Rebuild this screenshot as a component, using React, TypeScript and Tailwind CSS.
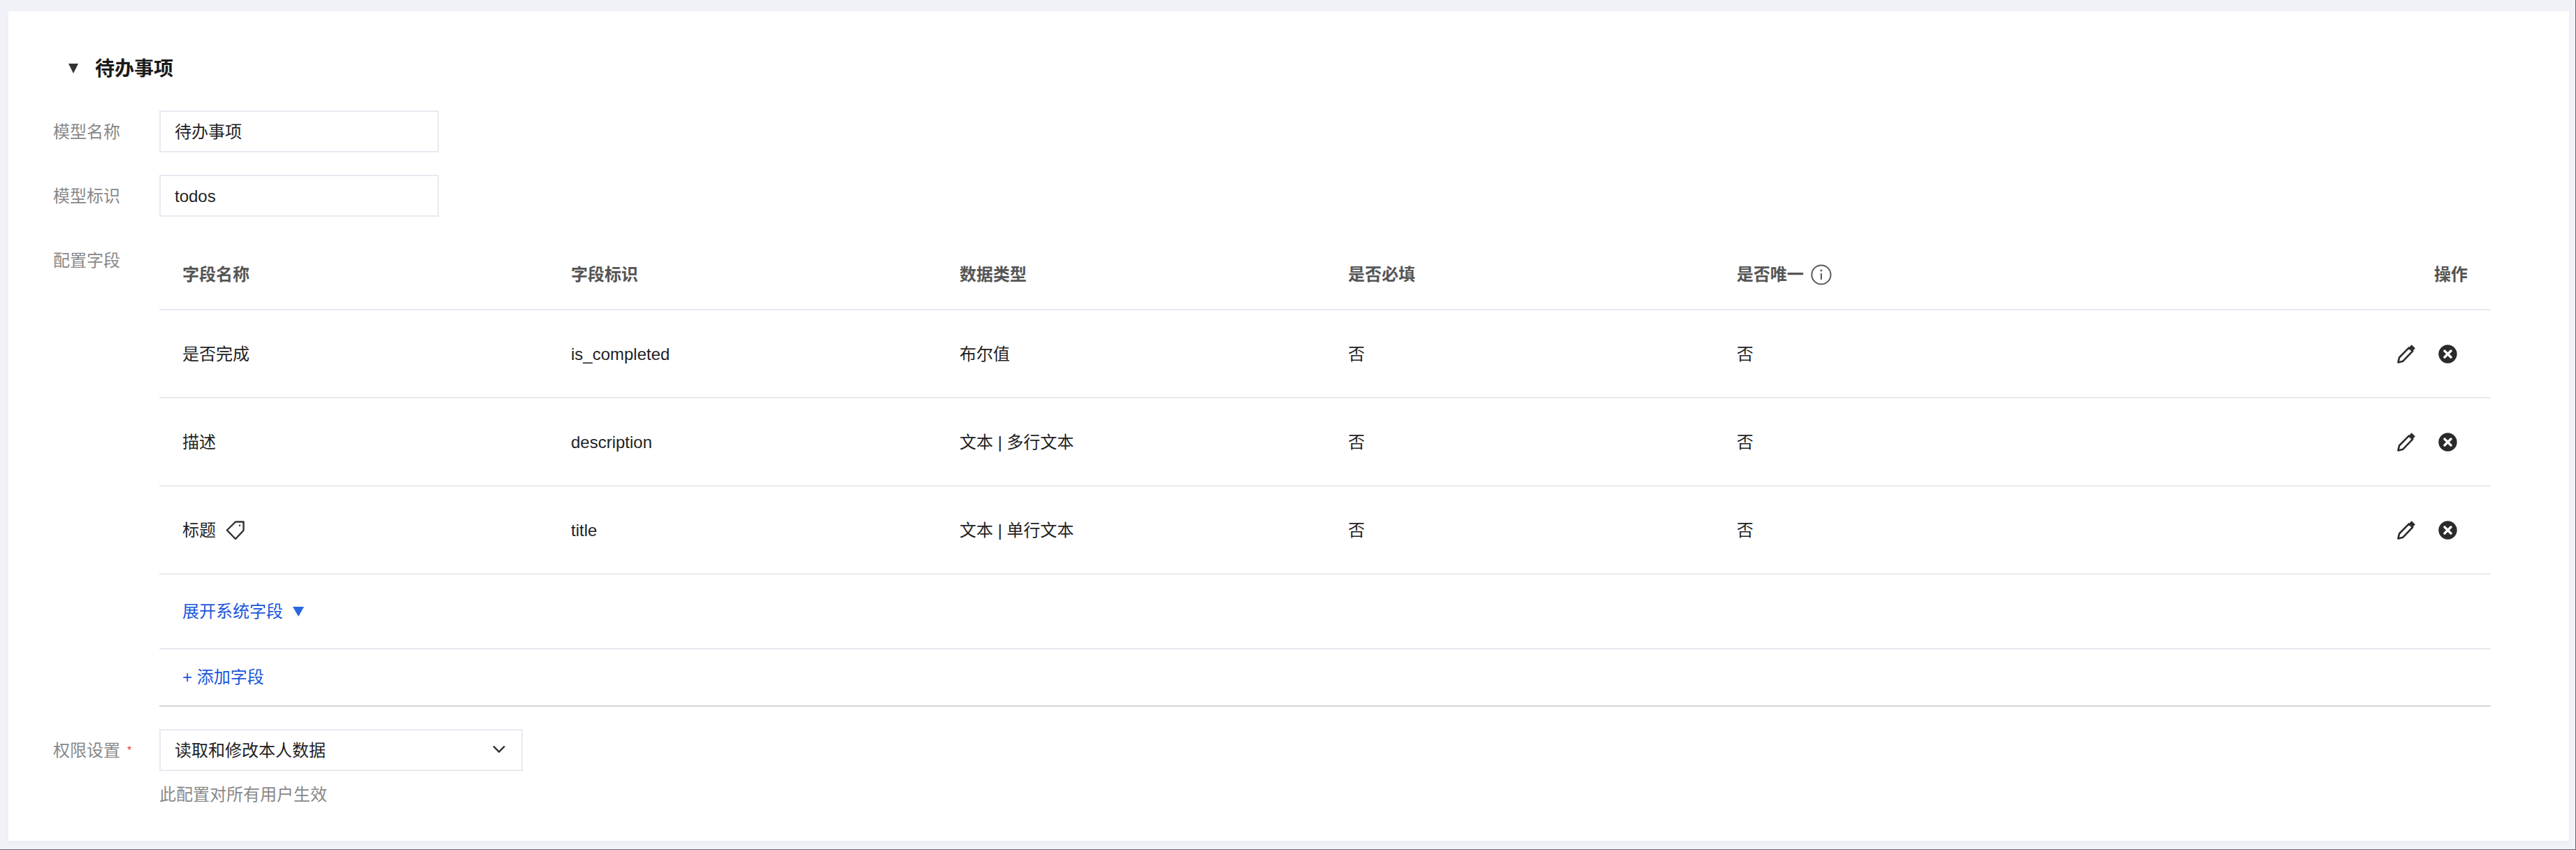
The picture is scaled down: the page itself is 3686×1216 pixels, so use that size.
const fieldRows = [
  { name: "是否完成", id: "is_completed", type: "布尔值" },
  { name: "描述", id: "description", type: "文本 | 多行文本" },
  { name: "标题", id: "title", type: "文本 | 单行文本", tag: true },
];

const PencilIcon = () => (
  <svg width="26" height="28" viewBox="0 0 26 28" fill="none" stroke="#2b2b2b" strokeWidth="2.6">
    <path d="M1.5 26.5l1.6-7L17 5.4l5.2 5L8.2 24.8z" strokeLinejoin="round" />
    <path d="M19.2 2.8l5.2 5" strokeWidth="4.4" />
  </svg>
);

const CloseIcon = () => (
  <svg width="27" height="27" viewBox="0 0 27 27">
    <circle cx="13.5" cy="13.5" r="13.2" fill="#2b2b2b" />
    <path d="M9 9l9 9M18 9l-9 9" stroke="#fff" strokeWidth="3.4" strokeLinecap="round" />
  </svg>
);

const TagIcon = () => (
  <svg width="27" height="28" viewBox="0 0 27 28" fill="none" stroke="#333" strokeWidth="2.4" className="ml-[14px]">
    <path d="M1.8 13.5L14 1.5h11.5v12.3L14 26z" strokeLinejoin="round" />
    <circle cx="20" cy="6.8" r="1.2" fill="#333" stroke="none" />
  </svg>
);

const InfoIcon = () => (
  <svg width="30" height="30" viewBox="0 0 30 30" fill="none" className="ml-[10px]">
    <circle cx="15" cy="15" r="13.6" stroke="#595959" strokeWidth="2" />
    <path d="M15 13v9" stroke="#595959" strokeWidth="2" />
    <circle cx="15" cy="9" r="1.4" fill="#595959" />
  </svg>
);

const FieldLabel = ({ children }: { children: React.ReactNode }) => (
  <div className="w-[152px] shrink-0 pt-[2px] text-[#888888]">{children}</div>
);

export default function App() {
  return (
    <div className="h-[1216px] w-[3686px] overflow-hidden border-r border-b border-[#666666] bg-[#f1f2f7] pt-4 pl-3 font-['Liberation_Sans','Noto_Sans_CJK_SC',sans-serif] text-2xl text-[#1f1f1f]">
      <div className="h-[1187px] w-[3664px] bg-white pt-[67px] pl-[64px] shadow-[0_2px_6px_rgba(0,0,0,0.03)]">
        <div className="flex h-[28px] items-center">
          <span className="mt-[2px] ml-[22px] h-0 w-0 border-x-[7.5px] border-t-[14px] border-x-transparent border-t-[#333333]" />
          <span className="mt-[3px] ml-[24px] text-[28px] leading-7 font-bold text-[#1a1a1a]">待办事项</span>
        </div>

        <div className="mt-[47px] flex items-center">
          <FieldLabel>模型名称</FieldLabel>
          <div className="flex h-[60px] w-[400px] items-center border-2 border-[#e7eaf0] pt-[2px] pl-[20px]">待办事项</div>
        </div>
        <div className="mt-[32px] flex items-center">
          <FieldLabel>模型标识</FieldLabel>
          <div className="flex h-[60px] w-[400px] items-center border-2 border-[#e7eaf0] pt-[2px] pl-[20px]">todos</div>
        </div>

        <div className="mt-[32px] flex items-start">
          <div className="w-[152px] shrink-0 pt-[15px] leading-8 text-[#888888]">配置字段</div>
          <div className="w-[3336px]">
            <div className="grid h-[102px] grid-cols-6 items-center border-b-2 border-[#e7eaf0] pt-[2px] font-bold text-[#555555]">
              <div className="pl-[33px]">字段名称</div>
              <div className="pl-[33px]">字段标识</div>
              <div className="pl-[33px]">数据类型</div>
              <div className="pl-[33px]">是否必填</div>
              <div className="flex items-center pl-[33px]">
                是否唯一
                <InfoIcon />
              </div>
              <div className="pr-[33px] text-right">操作</div>
            </div>

            {fieldRows.map((row) => (
              <div key={row.id} className="grid h-[126px] grid-cols-6 items-center border-b-2 border-[#e7eaf0]">
                <div className="flex items-center pt-[2px] pl-[33px]">
                  {row.name}
                  {row.tag && <TagIcon />}
                </div>
                <div className="pt-[2px] pl-[33px]">{row.id}</div>
                <div className="pt-[2px] pl-[33px]">{row.type}</div>
                <div className="pt-[2px] pl-[33px]">否</div>
                <div className="pt-[2px] pl-[33px]">否</div>
                <div className="flex items-center justify-end gap-[33px] pr-[48px]">
                  <PencilIcon />
                  <CloseIcon />
                </div>
              </div>
            ))}

            <div className="flex h-[107px] items-center gap-[14px] border-b-2 border-[#e7eaf0] pl-[33px] text-[#1a56db]">
              展开系统字段
              <span className="h-0 w-0 border-x-[8px] border-t-[14px] border-x-transparent border-t-[#2a66e0]" />
            </div>
            <div className="flex h-[82px] items-center border-b-2 border-[#d6d6d6] pl-[33px] text-[#1a56db]">+ 添加字段</div>
          </div>
        </div>

        <div className="mt-[32px] flex items-center">
          <div className="flex w-[152px] shrink-0 items-center gap-[10px] pt-[2px] text-[#888888]">
            权限设置
            <span className="text-base text-[#f03b3b]">*</span>
          </div>
          <div className="flex h-[60px] w-[520px] items-center justify-between border-2 border-[#e7eaf0] pt-[2px] pr-[22px] pl-[20px]">
            读取和修改本人数据
            <svg width="20" height="12" viewBox="0 0 20 12" fill="none" stroke="#2b2b2b" strokeWidth="2.4" className="mb-[4px]">
              <path d="M2 1.5l8 8 8-8" />
            </svg>
          </div>
        </div>
        <div className="mt-[18px] ml-[152px] text-[#888888]">此配置对所有用户生效</div>
      </div>
    </div>
  );
}
